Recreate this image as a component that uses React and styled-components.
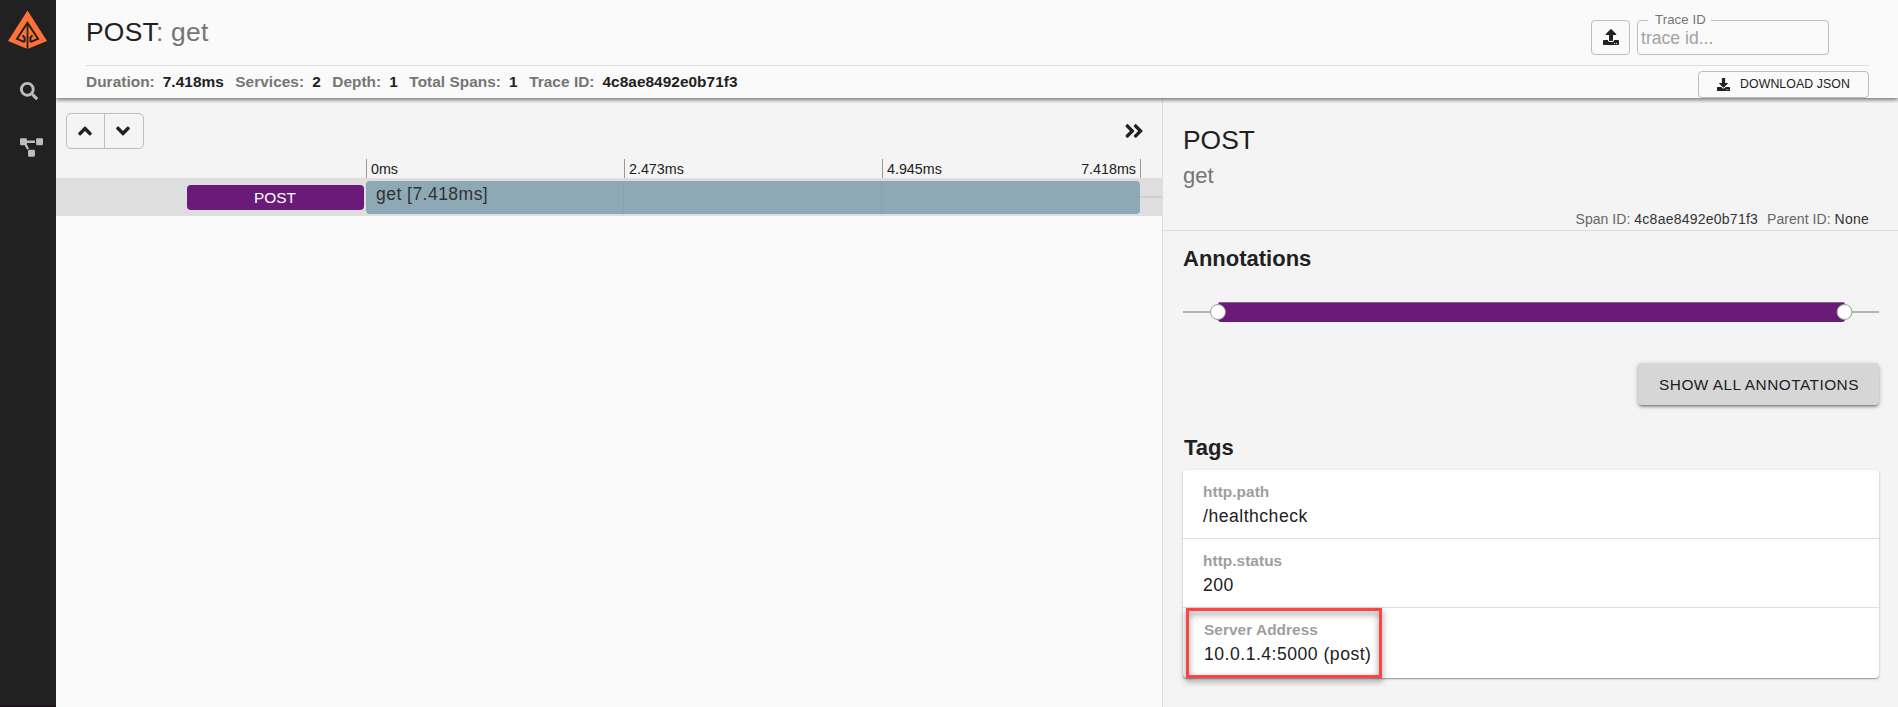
import React from 'react';
import styled, { createGlobalStyle } from 'styled-components';
import {
  FaSearch,
  FaProjectDiagram,
  FaUpload,
  FaDownload,
  FaAngleUp,
  FaAngleDown,
  FaAngleDoubleRight,
} from 'react-icons/fa';

const GlobalStyle = createGlobalStyle`
  *, *::before, *::after { box-sizing: border-box; }
  body {
    margin: 0;
    overflow: hidden;
    background: #fafafa;
    color: #212121;
    font-family: "Liberation Sans", Arial, sans-serif;
  }
  button { font-family: inherit; color: inherit; margin: 0; padding: 0; }
`;

const Page = styled.div`
  display: flex;
  width: 100%;
  height: 100vh;
`;

const Sidebar = styled.nav`
  flex: 0 0 56px;
  background: #212121;
  border-bottom: 2px solid #1d161b;
  display: flex;
  flex-direction: column;
  color: #bdbdbd;
`;

const LogoLink = styled.div`
  height: 50px;
  padding: 10px 0 0 7px;
`;

const NavItem = styled.div`
  height: ${(p) => p.$height}px;
  padding-left: 20px;
  display: flex;
  align-items: center;
  svg { display: block; }
`;

const Main = styled.main`
  flex: 1;
  min-width: 0;
  display: flex;
  flex-direction: column;
`;

const Header = styled.header`
  position: relative;
  z-index: 2;
  height: 98px;
  flex: none;
  padding: 0 29px 0 30px;
  background: #fafafa;
  box-shadow: 0 2px 4px rgba(0, 0, 0, 0.5);
  clip-path: inset(0 0 -5px 0);
`;

const TitleRow = styled.div`
  height: 66px;
  display: flex;
  justify-content: space-between;
  border-bottom: 1px solid #dedede;
`;

const Title = styled.h1`
  margin: 0;
  padding-top: 16px;
  font-size: 26.4px;
  line-height: 32px;
  font-weight: 400;
  letter-spacing: 0.25px;
  span { color: #757575; }
`;

const TraceLookup = styled.div`
  display: flex;
  gap: 7px;
  padding: 20px 40px 0 0;
`;

const OutlinedButton = styled.button`
  display: flex;
  align-items: center;
  justify-content: center;
  border: 1px solid #bdbdbd;
  border-radius: 4px;
  background: transparent;
  width: ${(p) => p.$width}px;
  height: ${(p) => p.$height}px;
  padding-bottom: 1px;
  font-size: 12.3px;
  letter-spacing: 0.1px;
  gap: 10px;
`;

const Field = styled.fieldset`
  margin: -7px 0 0;
  padding: 0 0 0 3px;
  width: 192px;
  height: 42px;
  border: 1px solid #bdbdbd;
  border-radius: 4px;
`;

const FieldLabel = styled.legend`
  margin-left: 7px;
  padding: 0 5px 0 7px;
  height: 14px;
  font-size: 13.2px;
  line-height: 13px;
  letter-spacing: 0.1px;
  color: #757575;
`;

const FieldInput = styled.input`
  display: block;
  width: 180px;
  height: 22px;
  padding: 0;
  border: 0;
  background: transparent;
  font: 17.6px "Liberation Sans", Arial, sans-serif;
  &::placeholder { color: #a3a3a3; opacity: 1; }
`;

const StatsRow = styled.div`
  height: 32px;
  display: flex;
  justify-content: space-between;
  align-items: flex-end;
`;

const Stats = styled.div`
  display: flex;
  gap: 11.5px;
  align-self: flex-start;
  padding-top: 6px;
  font-size: 15.4px;
  line-height: 20px;
  font-weight: 700;
  letter-spacing: 0.04px;
  white-space: nowrap;
`;

const Stat = styled.div`
  display: flex;
  gap: 8px;
  > span:first-child { color: #757575; }
`;

const Body = styled.div`
  flex: 1;
  display: flex;
  min-height: 0;
`;

const Timeline = styled.section`
  flex: 0 0 1106px;
  display: flex;
  flex-direction: column;
`;

const Toolbar = styled.div`
  height: 61px;
  padding: 15px 17px 0 10px;
  display: flex;
  justify-content: space-between;
  align-items: flex-start;
  background: #f4f4f4;
`;

const ButtonGroup = styled.div`
  display: flex;
  width: 78px;
  height: 36px;
  border: 1px solid #bdbdbd;
  border-radius: 5px;
`;

const GroupButton = styled.button`
  flex: 0 0 37px;
  display: flex;
  align-items: center;
  justify-content: center;
  padding-right: 1px;
  background: transparent;
  border: 0;
  & + & { flex: 1; padding-right: 2px; border-left: 1px solid #bdbdbd; }
`;

const CollapseToggle = styled.div`
  padding-top: 7px;
  svg { display: block; }
`;

const Axis = styled.div`
  display: grid;
  grid-template-columns: 258px 258px 258px;
  height: 19px;
  padding-left: 310px;
  background: #f4f4f4;
`;

const Tick = styled.div`
  display: flex;
  justify-content: space-between;
  padding: 2px 4px 0 4px;
  border-left: 1px solid #999;
  ${(p) => p.$last && 'border-right: 1px solid #999; margin-right: -1px;'}
  font-size: 14.3px;
  line-height: 16px;
  white-space: nowrap;
`;

const SpanRow = styled.div`
  display: flex;
  align-items: center;
  height: 38px;
  padding-left: 131px;
  background: #dedede;
`;

const ServiceName = styled.div`
  width: 177px;
  height: 25px;
  border-radius: 4px;
  margin: 0 2px 0 0;
  padding-right: 1px;
  background: #6a1b79;
  color: #fff;
  font-size: 15.4px;
  line-height: 25px;
  text-align: center;
`;

const DurationBar = styled.div`
  width: 774px;
  height: 33px;
  padding-left: 10px;
  border-radius: 4px;
  background:
    linear-gradient(#86a3af, #86a3af) 257px 0 / 1px 100% no-repeat,
    linear-gradient(#86a3af, #86a3af) 515px 0 / 1px 100% no-repeat,
    #8da9b5;
  font-size: 17.6px;
  line-height: 26px;
  letter-spacing: 0.43px;
  color: #333;
`;

const RowRule = styled.div`
  flex: 1;
  height: 2px;
  background: #cfcfcf;
`;

const Detail = styled.aside`
  flex: 1;
  background: #f4f4f4;
  border-left: 1px solid #dedede;
`;

const DetailHead = styled.div`
  display: flex;
  flex-direction: column;
  height: 133px;
  padding: 26px 29px 0 20px;
  border-bottom: 1px solid #dedede;
`;

const ServiceTitle = styled.div`
  font-size: 26.4px;
  line-height: 32px;
`;

const SpanTitle = styled.div`
  margin-top: 7px;
  font-size: 22px;
  line-height: 26px;
  color: #757575;
`;

const Ids = styled.div`
  display: flex;
  justify-content: flex-end;
  gap: 9px;
  margin-top: 21px;
  font-size: 14px;
  line-height: 18px;
  letter-spacing: 0.05px;
  color: #666;
  b { font-weight: 400; color: #333; letter-spacing: 0.24px; }
`;

const DetailBody = styled.div`
  padding: 0 19px 0 20px;
`;

const Heading = styled.h2`
  margin: 0;
  padding-top: ${(p) => p.$top}px;
  padding-left: ${(p) => p.$indent || 0}px;
  font-size: 22px;
  line-height: 26px;
  font-weight: 700;
`;

const AnnotationChart = styled.svg`
  display: block;
  margin-top: 25px;
`;

const ShowAllButton = styled.button`
  display: block;
  width: 241px;
  height: 42px;
  margin: 38px 0 0 auto;
  padding: 1px 0 0 1px;
  border: 0;
  border-radius: 4px;
  background: #d6d6d6;
  font-size: 15.4px;
  letter-spacing: 0.47px;
  box-shadow: 0 3px 2px -2px rgba(0, 0, 0, 0.25), 0 2px 3px rgba(0, 0, 0, 0.25), 0 1px 6px rgba(0, 0, 0, 0.14);
`;

const TagCard = styled.div`
  margin-top: 9px;
  border-radius: 4px;
  background: #fff;
  box-shadow: 0 1px 3px rgba(0, 0, 0, 0.2), 0 1px 1px rgba(0, 0, 0, 0.25);
`;

const TagItem = styled.div`
  position: relative;
  height: 69px;
  padding: 12px 20px 0 ${(p) => (p.$highlight ? 21 : 20)}px;
  & + & { border-top: 1px solid #dedede; }
  &:first-child { height: 68px; }
  &:last-child { height: 71px; }
`;

const TagName = styled.div`
  font-size: 15.4px;
  line-height: 20px;
  font-weight: 700;
  letter-spacing: 0.05px;
  color: #9e9e9e;
`;

const TagValue = styled.div`
  margin-top: 2px;
  font-size: 17.6px;
  line-height: 24px;
  letter-spacing: 0.5px;
`;

const HighlightFrame = styled.div`
  position: absolute;
  left: 3px;
  top: 0;
  width: 196px;
  height: 70px;
  border: 3px solid #fb4444;
  filter: drop-shadow(0 3px 3px rgba(0, 0, 0, 0.5));
`;

function Logo() {
  return (
    <svg width="42" height="40" viewBox="0 0 42 40">
      <path fill="#fe7139" d="M20.5 0.5 L40 31 L20.5 39 L1 31 Z" />
      <g fill="none" stroke="#212121" strokeWidth="2">
        <path d="M20.5 40 V14" strokeWidth="1.8" />
        <path d="M15.6 25.4 L17.6 27.6 V31.2 L16.6 31.6 L10 28.8 L20.5 12.8 L31 28.8 L24.4 31.6 L23.4 31.2 V27.6 L25.4 25.4" />
      </g>
    </svg>
  );
}

const stats = [
  ['Duration:', '7.418ms'],
  ['Services:', '2'],
  ['Depth:', '1'],
  ['Total Spans:', '1'],
  ['Trace ID:', '4c8ae8492e0b71f3'],
];

const tags = [
  { name: 'http.path', value: '/healthcheck' },
  { name: 'http.status', value: '200' },
  { name: 'Server Address', value: '10.0.1.4:5000 (post)', highlight: true },
];

export default function App() {
  return (
    <Page>
      <GlobalStyle />
      <Sidebar>
        <LogoLink><Logo /></LogoLink>
        <NavItem $height={82}><FaSearch size={18} /></NavItem>
        <NavItem $height={30}><FaProjectDiagram size={23} /></NavItem>
      </Sidebar>
      <Main>
        <Header>
          <TitleRow>
            <Title>POST<span>: get</span></Title>
            <TraceLookup>
              <OutlinedButton $width={39} $height={35}><FaUpload size={16} /></OutlinedButton>
              <Field>
                <FieldLabel>Trace ID</FieldLabel>
                <FieldInput placeholder="trace id..." />
              </Field>
            </TraceLookup>
          </TitleRow>
          <StatsRow>
            <Stats>
              {stats.map(([label, value]) => (
                <Stat key={label}><span>{label}</span><span>{value}</span></Stat>
              ))}
            </Stats>
            <OutlinedButton $width={171} $height={27}><FaDownload size={13} />DOWNLOAD JSON</OutlinedButton>
          </StatsRow>
        </Header>
        <Body>
          <Timeline>
            <Toolbar>
              <ButtonGroup>
                <GroupButton><FaAngleUp size={22} /></GroupButton>
                <GroupButton><FaAngleDown size={22} /></GroupButton>
              </ButtonGroup>
              <CollapseToggle><FaAngleDoubleRight size={22} /></CollapseToggle>
            </Toolbar>
            <Axis>
              <Tick>0ms</Tick>
              <Tick>2.473ms</Tick>
              <Tick $last><span>4.945ms</span><span>7.418ms</span></Tick>
            </Axis>
            <SpanRow>
              <ServiceName>POST</ServiceName>
              <DurationBar>get [7.418ms]</DurationBar>
              <RowRule />
            </SpanRow>
          </Timeline>
          <Detail>
            <DetailHead>
              <ServiceTitle>POST</ServiceTitle>
              <SpanTitle>get</SpanTitle>
              <Ids>
                <span>Span ID: <b>4c8ae8492e0b71f3</b></span>
                <span>Parent ID: <b>None</b></span>
              </Ids>
            </DetailHead>
            <DetailBody>
              <Heading $top={15}>Annotations</Heading>
              <AnnotationChart width="696" height="28" viewBox="0 0 696 28">
                <path d="M0 15H696" stroke="#b5b5b5" strokeWidth="2" />
                <rect x="35" y="5" width="627" height="20" rx="3" fill="#6a1b79" />
                <path d="M36 5.5H661" stroke="#86638d" />
                <circle cx="35" cy="15" r="7.5" fill="#fff" stroke="#999" />
                <circle cx="661.5" cy="15" r="7.5" fill="#fff" stroke="#999" />
              </AnnotationChart>
              <ShowAllButton>SHOW ALL ANNOTATIONS</ShowAllButton>
              <Heading $top={30} $indent={1}>Tags</Heading>
              <TagCard>
                {tags.map((tag) => (
                  <TagItem key={tag.name} $highlight={tag.highlight}>
                    <TagName>{tag.name}</TagName>
                    <TagValue>{tag.value}</TagValue>
                    {tag.highlight && <HighlightFrame />}
                  </TagItem>
                ))}
              </TagCard>
            </DetailBody>
          </Detail>
        </Body>
      </Main>
    </Page>
  );
}
